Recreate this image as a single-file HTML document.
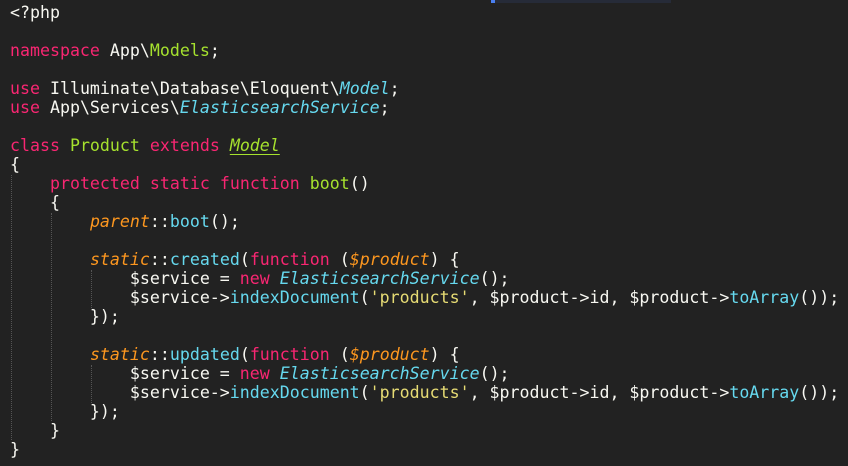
<!DOCTYPE html>
<html><head><style>
body{margin:0;background:#222222;width:848px;height:466px;overflow:hidden;position:relative}
pre{margin:0;padding:3px 0 0 10px;font-family:"DejaVu Sans Mono","Liberation Mono",monospace;font-size:16.6px;line-height:19px;color:#f8f8f2}
.k{color:#f92672}.g{color:#a6e22e}.c{color:#66d9ef}.ci{color:#66d9ef;font-style:italic}.o{color:#fd971f;font-style:italic}.s{color:#e6db74}
.u{text-decoration:underline;text-underline-offset:3px}
.guide{position:absolute;width:0;border-left:1px dotted #555}
.bar{position:absolute;left:491px;top:0;width:180px;height:3px;background:#262b38}
.bar:before{content:"";position:absolute;left:0;top:0;width:4px;height:3px;background:#4a7ff0}
</style></head><body>
<div class="bar"></div>
<div class="guide" style="left:11px;top:175px;height:265px"></div>
<div class="guide" style="left:51px;top:213px;height:208px"></div>
<div class="guide" style="left:91px;top:270px;height:38px"></div>
<div class="guide" style="left:91px;top:365px;height:38px"></div>
<pre>&lt;?php

<span class="k">namespace</span> App\<span class="g">Models</span>;

<span class="k">use</span> Illuminate\Database\Eloquent\<span class="ci">Model</span>;
<span class="k">use</span> App\Services\<span class="ci">ElasticsearchService</span>;

<span class="k">class</span> <span class="g">Product</span> <span class="k">extends</span> <span class="g u" style="font-style:italic">Model</span>
{
    <span class="k">protected</span> <span class="k">static</span> <span class="k">function</span> <span class="g">boot</span>()
    {
        <span class="o">parent</span>::<span class="c">boot</span>();

        <span class="o">static</span>::<span class="c">created</span>(<span class="k">function</span> (<span class="o">$product</span>) {
            $service = <span class="k">new</span> <span class="ci">ElasticsearchService</span>();
            $service-&gt;<span class="c">indexDocument</span>(<span class="s">'products'</span>, $product-&gt;id, $product-&gt;<span class="c">toArray</span>());
        });

        <span class="o">static</span>::<span class="c">updated</span>(<span class="k">function</span> (<span class="o">$product</span>) {
            $service = <span class="k">new</span> <span class="ci">ElasticsearchService</span>();
            $service-&gt;<span class="c">indexDocument</span>(<span class="s">'products'</span>, $product-&gt;id, $product-&gt;<span class="c">toArray</span>());
        });
    }
}</pre>
</body></html>
